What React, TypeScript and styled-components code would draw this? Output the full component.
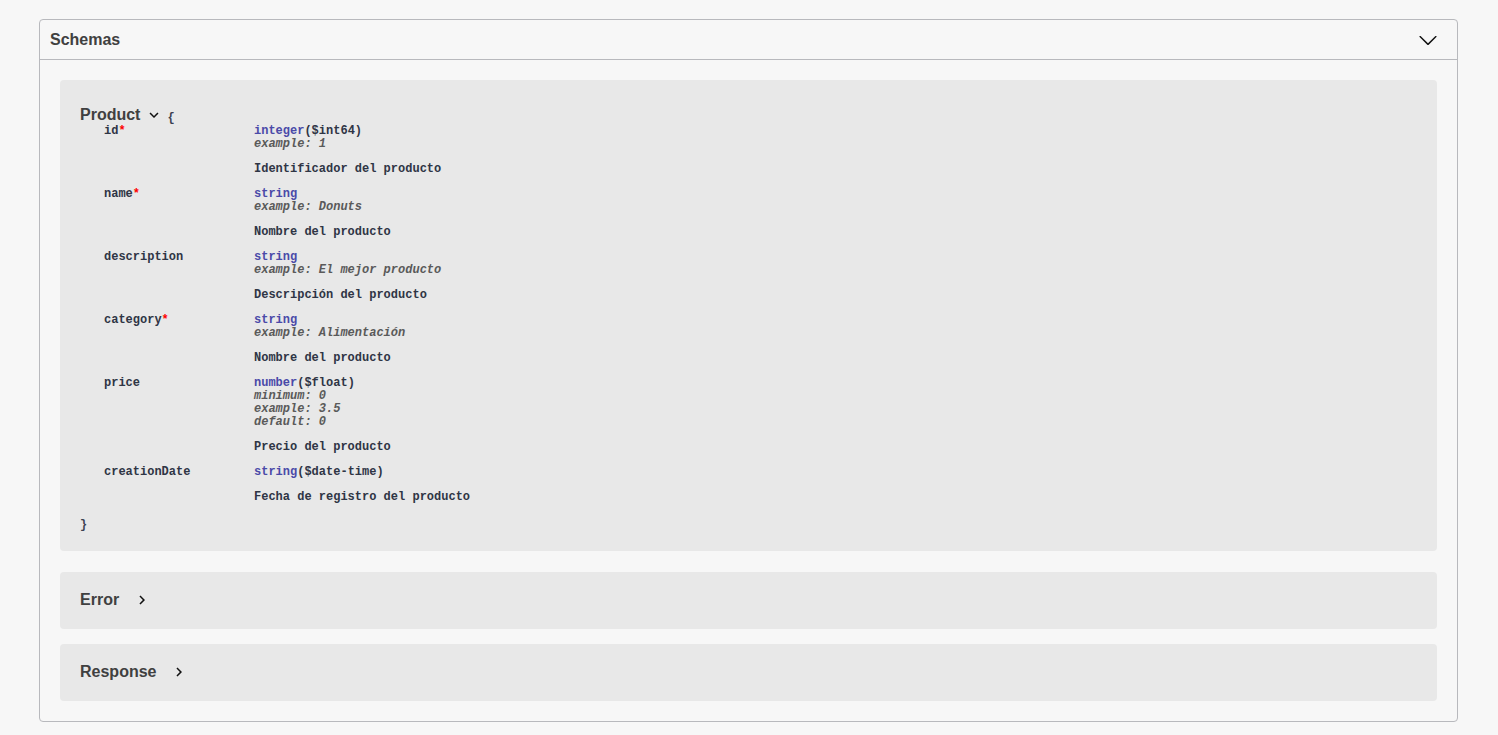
import React from "react";
import styled, { createGlobalStyle } from "styled-components";

const GlobalStyle = createGlobalStyle`
  html, body {
    margin: 0;
    padding: 0;
    background: #f7f7f7;
  }
  body {
    font-family: "Liberation Sans", Arial, sans-serif;
    color: #3b4151;
  }
`;

const Page = styled.div`
  padding: 19px 40px 14px 39px;
`;

const Section = styled.section`
  border: 1px solid #b8b9bd;
  border-radius: 4px;
  background: #f7f7f7;
`;

const SectionHeader = styled.div`
  height: 39px;
  display: flex;
  align-items: center;
  justify-content: space-between;
  padding: 0 19px 0 10px;
  border-bottom: 1px solid #b8b9bd;
`;

const SectionTitle = styled.h4`
  margin: 0;
  font-size: 16px;
  font-weight: 700;
  color: #404040;
`;

const ModelList = styled.div`
  display: flex;
  flex-direction: column;
  gap: 15px;
  padding: 20px 20px 20px;
`;

const ModelCard = styled.div<{ $open?: boolean }>`
  background: #e8e8e8;
  border-radius: 4px;
  padding: ${(p) => (p.$open ? "25px 20px 19px" : "18px 20px 19px")};
  margin-bottom: ${(p) => (p.$open ? "6px" : "0")};
`;

const ModelTitle = styled.div`
  display: flex;
  align-items: center;
  height: 20px;
  font-size: 16px;
  font-weight: 700;
  color: #404040;
`;

const Toggle = styled.svg<{ $gap: number }>`
  width: 18px;
  height: 18px;
  margin-left: ${(p) => p.$gap}px;
  fill: #111;
`;

const Brace = styled.span`
  font-family: "Liberation Mono", Courier, monospace;
  font-size: 12px;
  font-weight: 700;
  line-height: 13px;
  color: #3b4151;
  margin-left: 4px;
  align-self: flex-end;
  display: inline-block;
`;

const CloseBrace = styled.div`
  font-family: "Liberation Mono", Courier, monospace;
  font-size: 12px;
  font-weight: 700;
  line-height: 13px;
  padding-top: 3px;
  color: #3b4151;
`;

const PropRow = styled.div`
  display: grid;
  grid-template-columns: 150px 1fr;
  margin-left: 24px;
  padding-bottom: 12px;
  font-family: "Liberation Mono", Courier, monospace;
  font-size: 12px;
  font-weight: 700;
  line-height: 13px;
`;

const PropName = styled.div`
  color: #2f3545;
`;

const Required = styled.span`
  color: #f00;
`;

const PropValue = styled.div`
  display: flex;
  flex-direction: column;
`;

const TypeLine = styled.div`
  color: #2f3545;
`;

const TypeName = styled.span`
  color: #4a4aa8;
`;

const Meta = styled.div`
  color: #5a5a5a;
  font-style: italic;
`;

const Description = styled.div`
  margin-top: 12px;
  color: #2f3545;
`;

type Prop = {
  name: string;
  required?: boolean;
  type: string;
  format?: string;
  meta: string[];
  description: string;
};

const props: Prop[] = [
  { name: "id", required: true, type: "integer", format: "$int64", meta: ["example: 1"], description: "Identificador del producto" },
  { name: "name", required: true, type: "string", meta: ["example: Donuts"], description: "Nombre del producto" },
  { name: "description", type: "string", meta: ["example: El mejor producto"], description: "Descripción del producto" },
  { name: "category", required: true, type: "string", meta: ["example: Alimentación"], description: "Nombre del producto" },
  { name: "price", type: "number", format: "$float", meta: ["minimum: 0", "example: 3.5", "default: 0"], description: "Precio del producto" },
  { name: "creationDate", type: "string", format: "$date-time", meta: [], description: "Fecha de registro del producto" },
];

const ChevronRight = ({ gap, down }: { gap: number; down?: boolean }) => (
  <Toggle $gap={gap} viewBox="0 0 24 24" style={down ? { transform: "rotate(90deg)" } : undefined}>
    <path d="M10 6L8.59 7.41 13.17 12l-4.58 4.59L10 18l6-6z" />
  </Toggle>
);

const ArrowDown = () => (
  <svg width="20" height="20" viewBox="0 0 20 20" fill="#111">
    <path d="M17.418 6.109c.272-.268.709-.268.979 0s.271.701 0 .969l-7.908 7.83c-.27.268-.707.268-.979 0l-7.908-7.830c-.27-.268-.27-.701 0-.969.271-.268.709-.268.979 0L10 13.25l7.418-7.141z" />
  </svg>
);

export default function App() {
  return (
    <Page>
      <GlobalStyle />
      <Section>
        <SectionHeader>
          <SectionTitle>Schemas</SectionTitle>
          <ArrowDown />
        </SectionHeader>
        <ModelList>
          <ModelCard $open>
            <ModelTitle>
              Product
              <ChevronRight gap={5} down />
              <Brace>{"{"}</Brace>
            </ModelTitle>
            {props.map((p) => (
              <PropRow key={p.name}>
                <PropName>
                  {p.name}
                  {p.required && <Required>*</Required>}
                </PropName>
                <PropValue>
                  <TypeLine>
                    <TypeName>{p.type}</TypeName>
                    {p.format && `(${p.format})`}
                  </TypeLine>
                  {p.meta.map((m) => (
                    <Meta key={m}>{m}</Meta>
                  ))}
                  <Description>{p.description}</Description>
                </PropValue>
              </PropRow>
            ))}
            <CloseBrace>{"}"}</CloseBrace>
          </ModelCard>
          <ModelCard>
            <ModelTitle>
              Error
              <ChevronRight gap={14} />
            </ModelTitle>
          </ModelCard>
          <ModelCard>
            <ModelTitle>
              Response
              <ChevronRight gap={14} />
            </ModelTitle>
          </ModelCard>
        </ModelList>
      </Section>
    </Page>
  );
}
